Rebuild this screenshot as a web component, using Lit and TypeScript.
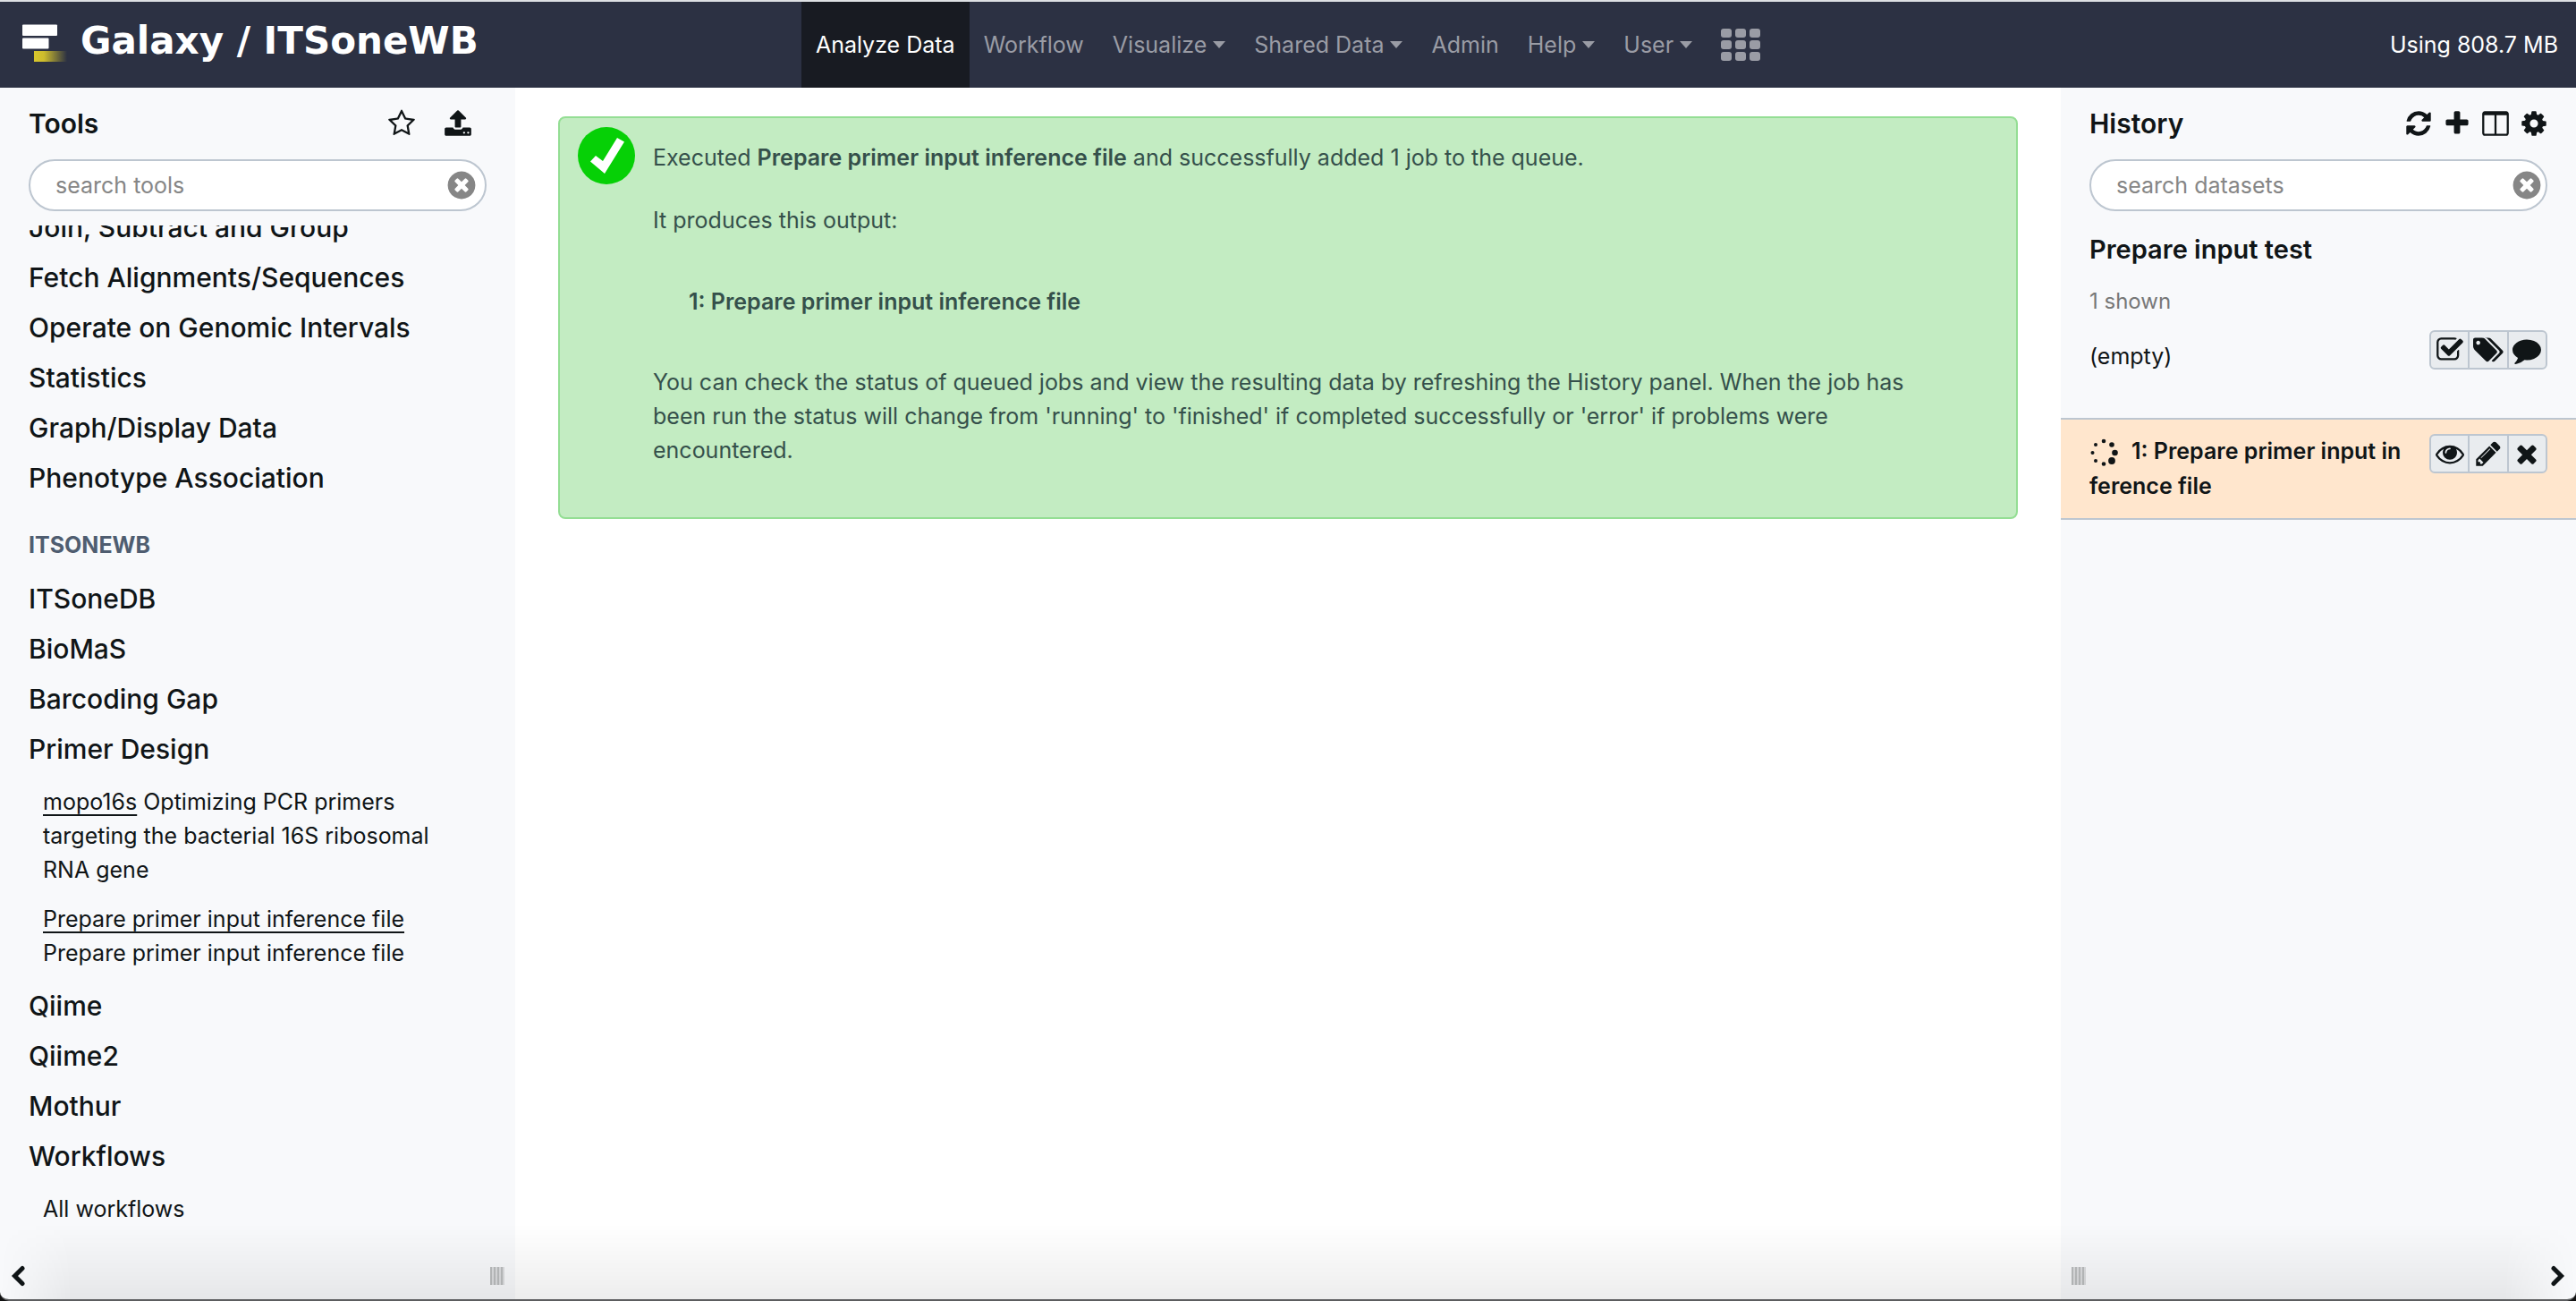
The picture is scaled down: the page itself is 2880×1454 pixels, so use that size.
import { LitElement, html, css, svg, nothing } from "lit";
import { customElement, property } from "lit/decorators.js";

type Glyph = { box?: string; body: unknown };

const glyphs: Record<string, Glyph> = {
  star: { body: svg`<path d="M1201 1004l306-297-422-62-189-382-189 382-422 62 306 297-73 421 378-199 377 199zm527-357q0 22-26 48l-363 354 86 500q1 7 1 20 0 50-41 50-19 0-40-12l-449-236-449 236q-22 12-40 12-21 0-31.500-14.500t-10.500-35.500q0-6 2-20l86-500-364-354q-25-27-25-48 0-37 56-46l502-73 225-455q19-41 49-41t49 41l225 455 502 73q56 9 56 46z"/>` },
  upload: { body: svg`<path d="M1344 1472q0-26-19-45t-45-19-45 19-19 45 19 45 45 19 45-19 19-45zm256 0q0-26-19-45t-45-19-45 19-19 45 19 45 45 19 45-19 19-45zm128-224v320q0 40-28 68t-68 28h-1472q-40 0-68-28t-28-68v-320q0-40 28-68t68-28h427q21 56 70.500 92t110.500 36h256q61 0 110.500-36t70.500-92h427q40 0 68 28t28 68zm-325-648q-17 40-59 40h-256v448q0 26-19 45t-45 19h-256q-26 0-45-19t-19-45v-448h-256q-42 0-59-40-17-39 14-69l448-448q18-19 45-19t45 19l448 448q31 30 14 69z"/>` },
  refresh: { body: svg`<path d="M1639 1056q0 5-1 7-64 268-268 434.500t-478 166.500q-146 0-282.500-55t-243.500-157l-129 129q-19 19-45 19t-45-19-19-45v-448q0-26 19-45t45-19h448q26 0 45 19t19 45-19 45l-137 137q71 66 161 102t187 36q134 0 250-65t186-179q11-17 53-117 8-23 30-23h192q13 0 22.500 9.500t9.500 22.500zm25-800v448q0 26-19 45t-45 19h-448q-26 0-45-19t-19-45 19-45l138-138q-148-137-349-137-134 0-250 65t-186 179q-11 17-53 117-8 23-30 23h-199q-13 0-22.500-9.500t-9.500-22.500v-7q65-268 270-434.500t480-166.500q146 0 284 55.500t245 156.500l130-129q19-19 45-19t45 19 19 45z"/>` },
  plus: { body: svg`<path d="M1600 736v192q0 40-28 68t-68 28h-416v416q0 40-28 68t-68 28h-192q-40 0-68-28t-28-68v-416h-416q-40 0-68-28t-28-68v-192q0-40 28-68t68-28h416v-416q0-40 28-68t68-28h192q40 0 68 28t28 68v416h416q40 0 68 28t28 68z"/>` },
  columns: { body: svg`<path d="M224 1536h608v-1152h-640v1120q0 13 9.500 22.500t22.500 9.500zm1376-32v-1120h-640v1152h608q13 0 22.500-9.500t9.500-22.500zm128-1216v1216q0 66-47 113t-113 47h-1344q-66 0-113-47t-47-113v-1216q0-66 47-113t113-47h1344q66 0 113 47t47 113z"/>` },
  cog: { body: svg`<path d="M1152 896q0-106-75-181t-181-75-181 75-75 181 75 181 181 75 181-75 75-181zm512-109v222q0 12-8 23t-20 13l-185 28q-19 54-39 91 35 50 107 138 10 12 10 25t-9 23q-27 37-99 108t-94 71q-12 0-26-9l-138-108q-44 23-91 38-16 136-29 186-7 28-36 28h-222q-14 0-24.500-8.500t-11.500-21.500l-28-184q-49-16-90-37l-141 107q-10 9-25 9-14 0-25-11-126-114-165-168-7-10-7-23 0-12 8-23 15-21 51-66.500t54-70.500q-27-50-41-99l-183-27q-13-2-21-12.500t-8-23.500v-222q0-12 8-23t19-13l186-28q14-46 39-92-40-57-107-138-10-12-10-24 0-10 9-23 26-36 98.500-107.500t94.500-71.500q13 0 26 10l138 107q44-23 91-38 16-136 29-186 7-28 36-28h222q14 0 24.500 8.500t11.500 21.500l28 184q49 16 90 37l142-107q9-9 24-9 13 0 25 10 129 119 165 170 7 8 7 22 0 12-8 23-15 21-51 66.500t-54 70.500q26 50 41 98l183 28q13 2 21 12.500t8 23.500z"/>` },
  check: { body: svg`<path d="M1472 930v318q0 119-84.500 203.500t-203.500 84.500h-832q-119 0-203.500-84.500t-84.500-203.500v-832q0-119 84.500-203.500t203.500-84.500h832q63 0 117 25 15 7 18 23 3 17-9 29l-49 49q-10 10-23 10-3 0-9-2-23-6-45-6h-832q-66 0-113 47t-47 113v832q0 66 47 113t113 47h832q66 0 113-47t47-113v-254q0-13 9-22l64-64q10-10 23-10 6 0 12 3 20 8 20 29zm231-489l-814 814q-24 24-57 24t-57-24l-430-430q-24-24-24-57t24-57l110-110q24-24 57-24t57 24l263 263 647-647q24-24 57-24t57 24l110 110q24 24 24 57t-24 57z"/>` },
  tags: { box: "0 0 1920 1792", body: svg`<path d="M448 448q0-53-37.500-90.500t-90.500-37.500-90.500 37.500-37.500 90.500 37.500 90.500 90.500 37.500 90.500-37.500 37.500-90.500zm1067 576q0 53-37 90l-491 492q-39 37-91 37-53 0-90-37l-715-716q-38-37-64.500-101t-26.500-117v-416q0-52 38-90t90-38h416q53 0 117 26.500t102 64.500l715 714q37 39 37 91zm384 0q0 53-37 90l-491 492q-39 37-91 37-36 0-59-14t-53-45l470-470q37-37 37-90 0-52-37-91l-715-714q-38-38-102-64.500t-117-26.500h224q53 0 117 26.500t102 64.500l715 714q37 39 37 91z"/>` },
  comment: { body: svg`<path d="M1792 896q0 174-120 321.500t-326 233-450 85.500q-70 0-145-8-198 175-460 242-49 14-114 22-17 2-30.500-9t-17.500-29v-1q-3-4-.5-12t2-10 4.500-9.500l6-9 7-8.500 8-9q7-8 31-34.500t34.500-38 31-39.500 32.500-51 27-59 26-76q-157-89-247.500-220t-90.500-281q0-130 71-248.500t191-204.500 286-136.500 348-50.500q244 0 450 85.500t326 233 120 321.500z"/>` },
  eye: { body: svg`<path d="M1664 960q-152-236-381-353 61 104 61 225 0 185-131.500 316.500t-316.500 131.500-316.500-131.500-131.500-316.500q0-121 61-225-229 117-381 353 133 205 333.500 326.500t434.500 121.500 434.500-121.500 333.500-326.500zm-720-384q0-20-14-34t-34-14q-125 0-214.500 89.500t-89.500 214.500q0 20 14 34t34 14 34-14 14-34q0-86 61-147t147-61q20 0 34-14t14-34zm848 384q0 34-20 69-140 230-376.500 368.500t-499.500 138.500-499.500-139-376.500-368q-20-35-20-69t20-69q140-229 376.500-368t499.500-139 499.500 139 376.500 368q20 35 20 69z"/>` },
  pencil: { body: svg`<path d="M491 1536l91-91-235-235-91 91v107h128v128h107zm523-928q0-22-22-22-10 0-17 7l-542 542q-7 7-7 17 0 22 22 22 10 0 17-7l542-542q7-7 7-17zm-54-192l416 416-832 832h-416v-416zm683 96q0 53-37 90l-166 166-416-416 166-165q36-38 90-38 53 0 91 38l235 234q37 39 37 91z"/>` },
  times: { body: svg`<path d="M1490 1322q0 40-28 68l-136 136q-28 28-68 28t-68-28l-294-294-294 294q-28 28-68 28t-68-28l-136-136q-28-28-28-68t28-68l294-294-294-294q-28-28-28-68t28-68l136-136q28-28 68-28t68 28l294 294 294-294q28-28 68-28t68 28l136 136q28 28 28 68t-28 68l-294 294 294 294q28 28 28 68z"/>` },
  clear: { body: svg`<path d="M1277 1122q0-26-19-45l-181-181 181-181q19-19 19-45 0-27-19-46l-90-90q-19-18-46-18-26 0-45 18l-181 181-181-181q-19-18-45-18-27 0-46 18l-90 90q-19 19-19 46 0 26 19 45l181 181-181 181q-19 19-19 45 0 27 19 46l90 90q19 18 46 18 26 0 45-18l181-181 181 181q19 18 45 18 27 0 46-18l90-90q19-19 19-46zm387-226q0 209-103 385.500t-279.500 279.500-385.500 103-385.500-103-279.500-279.500-103-385.500 103-385.500 279.500-279.500 385.500-103 385.500 103 279.500 279.500 103 385.500z"/>` },
  grid: { box: "0 0 44 36", body: [0, 1, 2].map((r) => [0, 1, 2].map((c) => svg`<rect x=${c * 16} y=${r * 13} width="12" height="10" rx="3"/>`)) },
  spinner: { box: "0 0 32 32", body: svg`<circle cx="16" cy="3" r="2.300"/><circle cx="25" cy="7" r="2.800"/><circle cx="28.500" cy="16" r="3.300"/><circle cx="25" cy="25" r="3.900"/><circle cx="16" cy="28.500" r="2.300"/><circle cx="7" cy="25" r="2"/><circle cx="3.500" cy="16" r="2"/><circle cx="7" cy="7" r="2"/>` },
  left: { box: "0 0 16 24", body: svg`<path d="M13 3.500L4.500 12l8.500 8.500" fill="none" stroke="currentColor" stroke-width="5" stroke-linecap="round"/>` },
  right: { box: "0 0 16 24", body: svg`<path d="M3 3.500l8.500 8.500L3 20.500" fill="none" stroke="currentColor" stroke-width="5" stroke-linecap="round"/>` },
};

const icon = (name: string) => html`<svg class="icon ${name}" viewBox=${glyphs[name].box ?? "0 0 1792 1792"} fill="currentColor" fill-rule="evenodd" aria-hidden="true">${glyphs[name].body}</svg>`;

const shared = css`
  * { box-sizing: border-box; }
  a { color: inherit; text-decoration: none; }
  button { margin: 0; padding: 0; border: 0; background: none; color: inherit; font: inherit; display: flex; align-items: center; justify-content: center; cursor: pointer; }
  h1, h2, h3, p, ul { margin: 0; padding: 0; }
  ul { list-style: none; }
  .icon { display: block; width: 32px; height: 32px; flex: none; }
`;

const panelStyles = css`
  :host { display: flex; flex-direction: column; min-height: 0; min-width: 0; background: #f8f9fb; }
  .head { display: flex; align-items: center; justify-content: space-between; padding: 18px 31px 18px 32px; }
  .title { font-size: 30px; line-height: 44px; font-weight: 600; }
  .actions { display: flex; gap: 11px; }
  .body { flex: 1; min-height: 0; }
  .foot { display: flex; align-items: center; justify-content: space-between; height: 52px; padding: 0 12px; }
  .left, .right { width: 16px; height: 24px; }
  .grip { width: 16px; height: 20px; background: repeating-linear-gradient(90deg, #bbbdbe 0 2px, #dcdddf 2px 4px); }
`;

@customElement("search-box")
export class SearchBox extends LitElement {
  @property() hint = "";
  static styles = [shared, css`
    :host { display: block; padding: 0 32px; }
    .box { display: flex; align-items: center; height: 58px; border: 2px solid #bdc6d0; border-radius: 29px; background: #fff; padding: 0 var(--clear-inset, 8px) 0 28px; }
    input { flex: 1; min-width: 0; border: 0; outline: 0; background: none; padding: 0; font: inherit; color: #111; }
    input::placeholder { color: #868686; opacity: 1; }
    button { color: #868686; }
    .clear { width: 36px; height: 36px; }
  `];
  render() {
    return html`<div class="box">
      <input type="text" placeholder=${this.hint} aria-label=${this.hint} />
      <button aria-label="clear search">${icon("clear")}</button>
    </div>`;
  }
}

@customElement("galaxy-masthead")
export class Masthead extends LitElement {
  static styles = [shared, css`
    :host { display: grid; grid-template-columns: 1fr auto 1fr; height: 98px; border-top: 2px solid #dde0e3; background: #2c3143; color: #fff; }
    .brand { display: flex; align-items: flex-start; gap: 14px; padding: 22px 24px; }
    .logo { width: 52px; height: 46px; }
    .name { font-family: "DejaVu Sans", Verdana, sans-serif; font-weight: 700; font-size: 42px; line-height: 44px; white-space: nowrap; }
    nav { display: flex; }
    nav a { display: flex; align-items: center; gap: 7px; padding: 0 16px; color: #9a9ca5; white-space: nowrap; }
    nav a.active { background: #181b22; color: #fff; }
    .caret { border: 7px solid transparent; border-top: 8px solid; border-bottom: 0; }
    .grid { width: 44px; height: 36px; }
    .quota { display: flex; align-items: center; justify-content: flex-end; padding: 0 20px; white-space: nowrap; }
  `];
  private items = [
    { text: "Analyze Data", active: true },
    { text: "Workflow" },
    { text: "Visualize", menu: true },
    { text: "Shared Data", menu: true },
    { text: "Admin" },
    { text: "Help", menu: true },
    { text: "User", menu: true },
  ];
  render() {
    return html`
      <a class="brand" href="#">
        <svg class="logo" viewBox="0 0 52 46" aria-hidden="true">
          <defs><linearGradient id="fade"><stop offset="0" stop-color="#d8c62c"/><stop offset=".3" stop-color="#cdbc2d"/><stop offset="1" stop-color="#2c3143"/></linearGradient></defs>
          <rect x="1" y="3.500" width="39" height="12.500" rx="1" fill="#fff"/>
          <rect x="1" y="18.500" width="29.500" height="12" rx="1" fill="#fff"/>
          <rect x="14" y="33" width="37" height="12" fill="url(#fade)"/>
        </svg>
        <span class="name">Galaxy / ITSoneWB</span>
      </a>
      <nav>
        ${this.items.map((i) => html`<a href="#" class=${i.active ? "active" : ""}>${i.text}${i.menu ? html`<span class="caret"></span>` : nothing}</a>`)}
        <a href="#" aria-label="apps">${icon("grid")}</a>
      </nav>
      <div class="quota">Using 808.7 MB</div>`;
  }
}

@customElement("tool-panel")
export class ToolPanel extends LitElement {
  static styles = [shared, panelStyles, css`
    .actions { gap: 31px; padding-right: 17px; }
    .body { margin-top: 16px; overflow-y: scroll; scrollbar-width: none; padding: 0 32px 100px; }
    .section { display: block; font-size: 30px; line-height: 56px; font-weight: 500; white-space: nowrap; }
    .label { padding: 28px 0 13px; line-height: 38px; font-size: 25px; font-weight: 700; color: #4f5d70; }
    .tools { display: flex; flex-direction: column; gap: 17px; padding: 12px 16px; }
    .link { text-decoration: underline; text-decoration-thickness: 2px; text-underline-offset: 5px; }
  `];
  firstUpdated() {
    this.renderRoot.querySelector(".body")!.scrollTop = 26;
  }
  private sections(names: string[]) {
    return names.map((n) => html`<a class="section" href="#">${n}</a>`);
  }
  render() {
    return html`
      <div class="head">
        <h2 class="title">Tools</h2>
        <div class="actions">
          <button aria-label="favorites">${icon("star")}</button>
          <button aria-label="upload">${icon("upload")}</button>
        </div>
      </div>
      <search-box hint="search tools"></search-box>
      <div class="body">
        ${this.sections(["Join, Subtract and Group", "Fetch Alignments/Sequences", "Operate on Genomic Intervals", "Statistics", "Graph/Display Data", "Phenotype Association"])}
        <h3 class="label">ITSONEWB</h3>
        ${this.sections(["ITSoneDB", "BioMaS", "Barcoding Gap", "Primer Design"])}
        <ul class="tools">
          <li><a class="link" href="#">mopo16s</a> Optimizing PCR primers targeting the bacterial 16S ribosomal RNA gene</li>
          <li><a class="link" href="#">Prepare primer input inference file</a> Prepare primer input inference file</li>
        </ul>
        ${this.sections(["Qiime", "Qiime2", "Mothur", "Workflows"])}
        <ul class="tools"><li><a href="#">All workflows</a></li></ul>
      </div>
      <div class="foot">
        <button aria-label="collapse tools">${icon("left")}</button>
        <span class="grip"></span>
      </div>`;
  }
}

@customElement("job-message")
export class JobMessage extends LitElement {
  static styles = [shared, css`
    :host { display: block; background: #fff; padding: 32px 48px; min-width: 0; }
    .card { display: flex; align-items: flex-start; gap: 20px; padding: 10px 84px 56px 20px; border: 2px solid #94de94; border-radius: 8px; background: #c3ecc2; color: #35504b; }
    .ok { width: 64px; height: 64px; flex: none; }
    .text { padding-top: 15px; }
    .text p + p { margin-top: 32px; }
    .text .output { margin: 53px 40px 52px; font-weight: 600; }
    .name { font-weight: 600; }
  `];
  render() {
    return html`<div class="card">
      <svg class="ok" viewBox="0 0 64 64" aria-hidden="true">
        <circle cx="32" cy="32" r="32" fill="#06d006"/>
        <path d="M14 38.500L20 32l8 6L44 12l8 4.500L30 52z" fill="#fff"/>
      </svg>
      <div class="text">
        <p>Executed <b class="name">Prepare primer input inference file</b> and successfully added 1 job to the queue.</p>
        <p>It produces this output:</p>
        <div class="output">1: Prepare primer input inference file</div>
        <p>You can check the status of queued jobs and view the resulting data by refreshing the History panel. When the job has been run the status will change from 'running' to 'finished' if completed successfully or 'error' if problems were encountered.</p>
      </div>
    </div>`;
  }
}

@customElement("history-panel")
export class HistoryPanel extends LitElement {
  static styles = [shared, panelStyles, css`
    search-box { --clear-inset: 3px; }
    .summary { display: flex; flex-direction: column; gap: 13px; padding: 21px 32px 50px; }
    .name { font-size: 29px; padding-bottom: 4px; }
    .count { font-size: 24px; color: #777; }
    .row { display: flex; justify-content: space-between; align-items: flex-end; height: 48px; }
    .group { display: flex; flex: none; align-self: flex-start; width: 132px; height: 44px; border: 2px solid #bdc6d0; border-radius: 6px; background: #e9ecef; }
    .group button { flex: 1; }
    .group button + button { border-left: 2px solid #bdc6d0; }
    .tags { width: 34px; }
    .dataset { display: flex; justify-content: space-between; gap: 24px; padding: 16px 32px; border: 2px solid #bdc6d0; border-width: 2px 0; background: #ffe6cd; }
    .label { font-weight: 600; line-height: 39px; }
    .label .icon { display: inline-block; vertical-align: middle; margin-right: 15px; }
  `];
  private group(names: [string, string][]) {
    return html`<div class="group">${names.map(([n, label]) => html`<button aria-label=${label}>${icon(n)}</button>`)}</div>`;
  }
  render() {
    return html`
      <div class="head">
        <h2 class="title">History</h2>
        <div class="actions">
          <button aria-label="refresh">${icon("refresh")}</button>
          <button aria-label="new history">${icon("plus")}</button>
          <button aria-label="show side by side">${icon("columns")}</button>
          <button aria-label="history options">${icon("cog")}</button>
        </div>
      </div>
      <search-box hint="search datasets"></search-box>
      <div class="body">
        <div class="summary">
          <h3 class="title name">Prepare input test</h3>
          <div class="count">1 shown</div>
          <div class="row">
            <span>(empty)</span>
            ${this.group([["check", "select datasets"], ["tags", "edit tags"], ["comment", "edit annotation"]])}
          </div>
        </div>
        <div class="dataset">
          <div class="label">${icon("spinner")}1: Prepare primer input in<wbr>ference file</div>
          ${this.group([["eye", "view data"], ["pencil", "edit attributes"], ["times", "delete"]])}
        </div>
      </div>
      <div class="foot">
        <span class="grip"></span>
        <button aria-label="collapse history">${icon("right")}</button>
      </div>`;
  }
}

@customElement("app-root")
export class AppRoot extends LitElement {
  static styles = [shared, css`
    :host { display: block; background: #111; color: #101517; font: 400 25px/38px Inter, "Liberation Sans", sans-serif; }
    .window { position: relative; display: flex; flex-direction: column; height: 100vh; overflow: hidden; border-bottom: 2px solid #5c5d5f; border-radius: 0 0 10px 10px; }
    .columns { flex: 1; min-height: 0; display: grid; grid-template-columns: minmax(320px, 20%) minmax(0, 1fr) minmax(320px, 20%); }
    .shade { position: absolute; inset: auto 0 0; height: 84px; pointer-events: none; background: linear-gradient(transparent, rgb(0 0 0 / 7%)); mask-image: linear-gradient(90deg, transparent, #000 80px calc(100% - 80px), transparent); }
  `];
  render() {
    return html`<div class="window">
      <galaxy-masthead></galaxy-masthead>
      <div class="columns">
        <tool-panel></tool-panel>
        <job-message></job-message>
        <history-panel></history-panel>
      </div>
      <div class="shade"></div>
    </div>`;
  }
}
